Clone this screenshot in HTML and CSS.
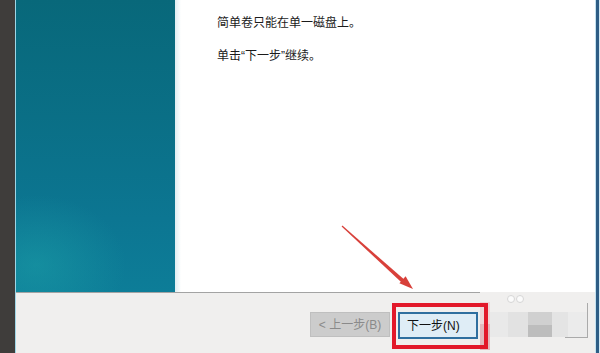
FILE: index.html
```html
<!DOCTYPE html>
<html lang="zh-CN">
<head>
<meta charset="utf-8">
<title>新建简单卷向导</title>
<link rel="stylesheet" href="styles.css">
</head>
<body>
<div class="screen">
  <div class="desk-strip"></div>
  <div class="window">
    <div class="main">
      <div class="banner"></div>
      <div class="fade"></div>
      <div class="content">
        <p class="line">简单卷只能在单一磁盘上。</p>
        <p class="line">单击“下一步”继续。</p>
      </div>
    </div>
    <div class="buttonbar">
      <button class="btn btn-disabled" disabled>&lt; 上一步(B)</button>
      <button class="btn btn-default">下一步(N)</button>
      <button class="btn btn-cancel">取消</button>
    </div>
  </div>
  <div class="edge-right"></div>

  <div class="mosaic">
    <div class="dots"><span></span><span></span></div>
    <div class="tiles">
      <span class="t pink"></span>
      <span class="t l1"></span>
      <span class="t l2"></span>
      <span class="t dk">
        <i class="dk-top"></i><i class="dk-bot"></i>
      </span>
      <span class="t l3"></span>
      <span class="t l4"></span>
    </div>
    <div class="cancel-edge"></div>
  </div>

  <div class="highlight"></div>

  <svg class="arrow" width="600" height="353" viewBox="0 0 600 353">
    <polygon points="341.6,226.4 342.4,225.6 404.2,279.6 401.6,282.6" fill="#d8403a"/>
    <polygon points="413,289 399.4,283.2 405.6,276.2" fill="#d8403a"/>
  </svg>
</div>
</body>
</html>
```

FILE: styles.css
```css
* { box-sizing: border-box; }

html, body {
  margin: 0;
  padding: 0;
  width: 600px;
  height: 353px;
  overflow: hidden;
  background: #3f3d3b;
}

.screen {
  position: relative;
  width: 600px;
  height: 353px;
  display: flex;
  font-family: "Liberation Sans", "Noto Sans CJK SC", sans-serif;
}

.desk-strip {
  width: 15px;
  flex: none;
  background: #3f3d3b;
}

.window {
  flex: 1;
  display: grid;
  grid-template-rows: 292px 1fr;
  border-left: 1px solid #9fd6e6;
  background: #ffffff;
}

.main {
  display: flex;
  background: #ffffff;
}

.banner {
  width: 159px;
  flex: none;
  background:
    radial-gradient(ellipse 90px 70px at 20px 265px, rgba(30, 165, 170, 0.45), rgba(30, 165, 170, 0) 100%),
    linear-gradient(to bottom, #08687a 0%, #0a6f86 40%, #0c7692 75%, #0d7d98 100%);
}

.fade {
  width: 6px;
  flex: none;
  background: linear-gradient(to right, #dfeef2, #ffffff);
}

.content {
  flex: 1;
  padding: 15px 0 0 36px;
}

.line {
  margin: 0 0 17px;
  font-size: 12px;
  line-height: 16px;
  color: #1b1b1b;
  white-space: nowrap;
}

.buttonbar {
  border-top: 1px solid #a3a3a3;
  background: #f0efee;
  display: flex;
  align-items: flex-start;
  gap: 8px;
  padding: 19px 0 0 294px;
}

.btn {
  height: 25px;
  margin: 0;
  padding: 0;
  font-family: "Liberation Sans", "Noto Sans CJK SC", sans-serif;
  font-size: 12px;
  line-height: 16px;
  flex: none;
}

.btn-disabled {
  width: 80px;
  background: #cccccc;
  border: 1px solid #bfbfbf;
  color: #8a8a8a;
}

.btn-default {
  width: 80px;
  height: 27px;
  background: #dfedf6;
  border: 2px solid #2f6f9f;
  color: #111111;
  text-align: left;
  padding-left: 7px;
}

.btn-cancel {
  width: 80px;
  margin-left: 2px;
  background: #e1e1e1;
  border: 1px solid #adadad;
  color: #111111;
}

.edge-right {
  width: 5px;
  flex: none;
  background: linear-gradient(to right, #c4e2f0 0 1px, #2d5d85 1px 4px, #d2e8f3 4px 5px);
}

/* blurred watermark over the cancel button */
.mosaic {
  position: absolute;
  left: 480px;
  top: 292px;
  width: 115px;
  height: 61px;
  background: #f0efee;
}

.dots {
  position: absolute;
  left: 27px;
  top: 3px;
  display: flex;
  gap: 1px;
}

.dots span {
  width: 8px;
  height: 8px;
  border-radius: 50%;
  background: #fbfbfb;
  border: 1px solid #d6d6d6;
}

.tiles {
  position: absolute;
  left: 0;
  top: 10px;
  height: 48px;
  display: flex;
}

.t { display: block; height: 100%; }

.pink { width: 10px; background: linear-gradient(to bottom, #eed6d8 0 22px, #e2b9be 22px); }
.l1 { width: 18px; margin-top: 10px; height: 25px; background: #e9e9e9; }
.l2 { width: 20px; margin-top: 10px; height: 25px; background: #e2e2e2; }
.dk {
  width: 24px;
  margin-top: 10px;
  height: 25px;
  display: flex;
  flex-direction: column;
}
.dk-top { flex: 1; background: #d0d0d0; }
.dk-bot { flex: 1; background: #bdbdbd; }
.l3 { width: 16px; margin-top: 10px; height: 25px; background: #e4e4e4; }
.l4 { width: 19px; margin-top: 10px; height: 25px; background: #ebebeb; }

.cancel-edge {
  position: absolute;
  left: 85px;
  top: 11px;
  width: 23px;
  height: 35px;
  border-right: 1px solid #aaaaaa;
  border-bottom: 1px solid #aaaaaa;
}

/* red annotation box */
.highlight {
  position: absolute;
  left: 392px;
  top: 303px;
  width: 96px;
  height: 46px;
  border: 4px solid #e2182a;
}

.arrow {
  position: absolute;
  left: 0;
  top: 0;
  pointer-events: none;
}
```
